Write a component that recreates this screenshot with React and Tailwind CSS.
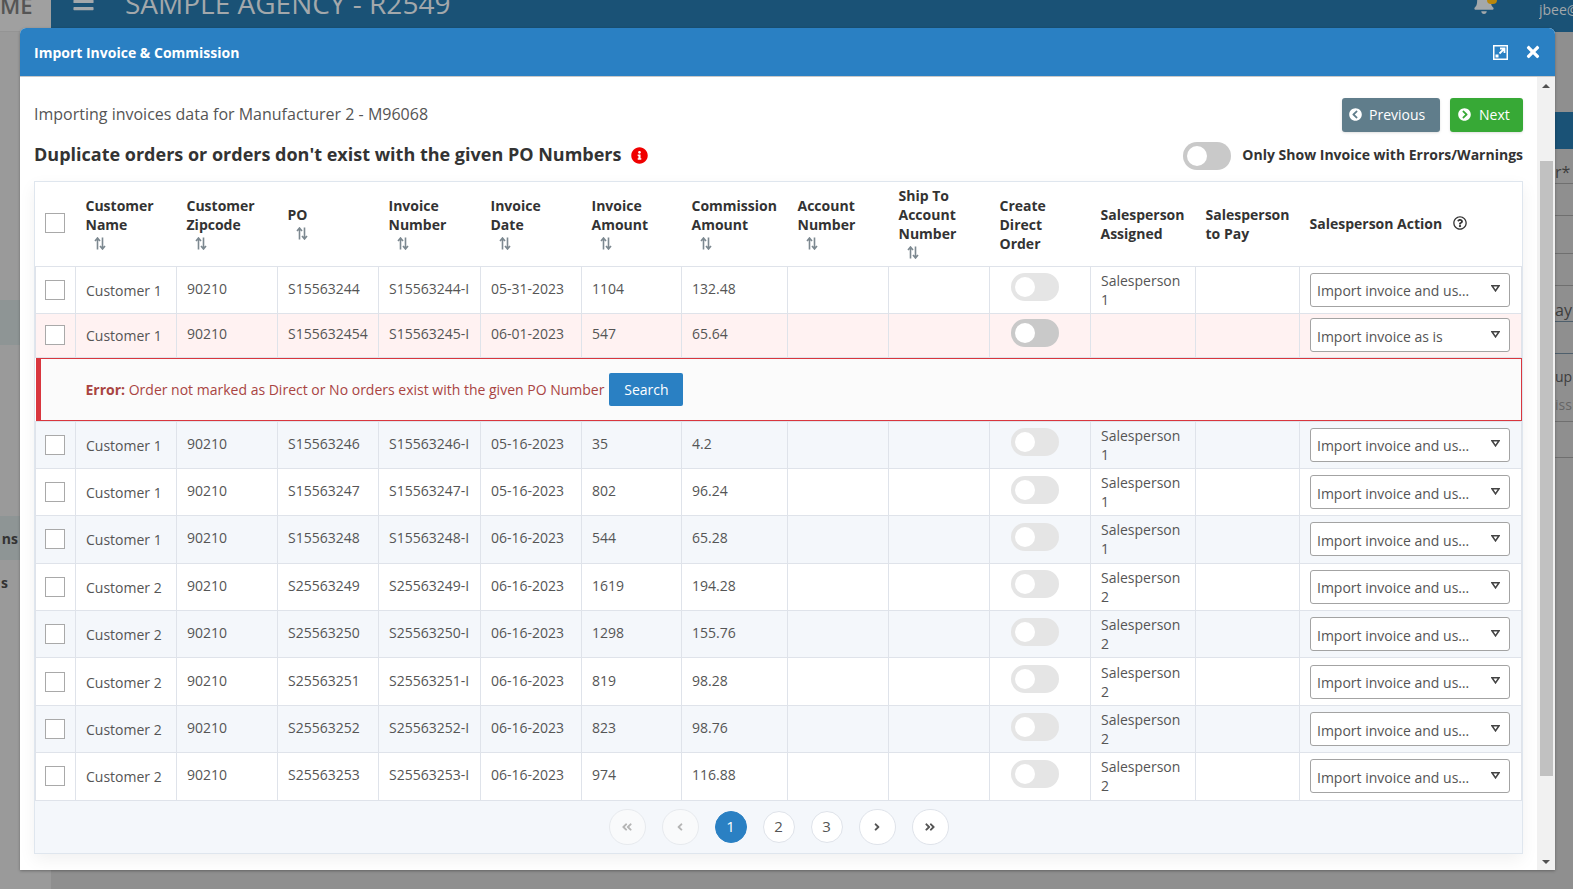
import React from 'react';
import { FaBars, FaBell, FaTimes, FaChevronCircleLeft, FaChevronCircleRight, FaInfoCircle, FaRegQuestionCircle, FaAngleDoubleLeft, FaAngleDoubleRight, FaAngleLeft, FaAngleRight } from "react-icons/fa";

const rows = [
    { c: 'Customer 1', po: 'S15563246', inv: 'S15563246-I', date: '05-16-2023', amt: '35', com: '4.2', sp: '1' },
    { c: 'Customer 1', po: 'S15563247', inv: 'S15563247-I', date: '05-16-2023', amt: '802', com: '96.24', sp: '1' },
    { c: 'Customer 1', po: 'S15563248', inv: 'S15563248-I', date: '06-16-2023', amt: '544', com: '65.28', sp: '1' },
    { c: 'Customer 2', po: 'S25563249', inv: 'S25563249-I', date: '06-16-2023', amt: '1619', com: '194.28', sp: '2' },
    { c: 'Customer 2', po: 'S25563250', inv: 'S25563250-I', date: '06-16-2023', amt: '1298', com: '155.76', sp: '2' },
    { c: 'Customer 2', po: 'S25563251', inv: 'S25563251-I', date: '06-16-2023', amt: '819', com: '98.28', sp: '2' },
    { c: 'Customer 2', po: 'S25563252', inv: 'S25563252-I', date: '06-16-2023', amt: '823', com: '98.76', sp: '2' },
    { c: 'Customer 2', po: 'S25563253', inv: 'S25563253-I', date: '06-16-2023', amt: '974', com: '116.88', sp: '2' },
];

const headers = [
    ['Customer Name', true], ['Customer Zipcode', true], ['PO', true], ['Invoice Number', true],
    ['Invoice Date', true], ['Invoice Amount', true], ['Commission Amount', true], ['Account Number', true],
    ['Ship To Account Number', true], ['Create Direct Order', false], ['Salesperson Assigned', false], ['Salesperson to Pay', false],
];

const SortIcon = () => (
    <svg width="12" height="13" viewBox="0 0 12 13" className="block ml-[8px] text-[#7c8890]" fill="none" stroke="currentColor" strokeWidth="1.6">
        <path d="M3.5 12.5V1.5M1 4l2.5-3L6 4" />
        <path d="M8.5 .5v11M6 9l2.5 3L11 9" />
    </svg>
);

const Checkbox = () => <div className="w-5 h-5 ml-[9px] bg-white border-[1.5px] border-[#a9a9a9]" />;

const Toggle = ({ dark }) => (
    <div className={`w-12 h-7 ml-[21px] rounded-full p-1 ${dark ? 'bg-[#c9c9c9]' : 'bg-[#e5e5e5]'}`}>
        <div className="w-5 h-5 rounded-full bg-white" />
    </div>
);

const Select = ({ text }) => (
    <div className="w-[200px] h-[34px] bg-white border border-[#a3a3a3] rounded-[3px] pl-[6px] pr-[9px] pt-[2px] flex items-center justify-between text-[14px] text-[#555]">
        <span className="whitespace-nowrap">{text}</span>
        <svg width="9" height="7" viewBox="0 0 11 9" className="-mt-[4px]" fill="none" stroke="#444" strokeWidth="2">
            <path d="M1 1h9L5.500 7.500z" />
        </svg>
    </div>
);

const Row = ({ r, bg, h }) => {
    const td = "border border-[#dfe3ea] px-[10px] align-middle text-[14px] leading-[19px] text-[#555]";
    const up = td + " pb-[3px]";
    return (
        <tr className={bg} style={{ height: h }}>
            <td className={td + " !px-0"}><Checkbox /></td>
            <td className={td + " pt-[1px]"}>{r.c}</td>
            <td className={up}>90210</td>
            <td className={up}>{r.po}</td>
            <td className={up}>{r.inv}</td>
            <td className={up}>{r.date}</td>
            <td className={up}>{r.amt}</td>
            <td className={up}>{r.com}</td>
            <td className={up}></td>
            <td className={up}></td>
            <td className={td + " !px-0"}><div className="pb-[5px]"><Toggle dark={r.dark} /></div></td>
            <td className={td}>{r.sp ? <>Salesperson<br />{r.sp}</> : null}</td>
            <td className={td}></td>
            <td className={td}><Select text={r.action || 'Import invoice and us…'} /></td>
        </tr>
    );
};

const PageBtn = ({ children, off, active, big }) => (
    <div className={`flex items-center justify-center rounded-full border ${big ? 'w-[37px] h-[36px] text-[12px]' : 'w-[32px] h-[32px] text-[15px]'} ${active ? 'bg-[#2a80c3] border-[#2a80c3] text-white' : off ? 'bg-[#f9fafb] border-[#e7eaee] text-[#b5b5b5]' : 'bg-white border-[#dfe3ea] text-[#555]'}`}>
        {children}
    </div>
);

const SideLine = ({ h, text, dark }) => (
    <div className={`border-b ${dark ? 'border-[#4e5f6c]' : 'border-[#6f6f6f]'} text-[16px] leading-[20px] text-[#3d3d3d] flex items-end whitespace-nowrap pb-[1px]`} style={{ height: h }}>
        {text}
    </div>
);

export default function App() {
    return (
        <div className="relative h-[889px] w-full overflow-hidden bg-[#8f8f8f] font-['Open_Sans',sans-serif]">
            {/* Page behind the dialog */}
            <div className="flex h-[32px]">
                <div className="w-[51px] bg-[#a0a0a0] border-b border-[#949494] overflow-hidden">
                    <div className="-mt-[11px] text-[22px] leading-[32px] font-semibold text-[#555]">ME</div>
                </div>
                <div className="flex-1 bg-[#1a5276] flex items-start overflow-hidden">
                    <FaBars className="ml-[21px] -mt-[10px] w-[23px] h-[23px] text-[#a3a8ab]" />
                    <div className="ml-[30px] -mt-[13px] text-[28px] leading-[32px] text-[#a3a8ab] whitespace-nowrap">SAMPLE AGENCY - R2549</div>
                    <div className="ml-auto relative w-[30px] h-[14px] mr-[37px]">
                        <FaBell className="-mt-[8px] w-[24px] h-[22px] text-[#a3a8ab]" />
                        <div className="absolute -top-[4px] left-[15px] w-[10px] h-[8px] rounded-full bg-[#b8860b]" />
                    </div>
                    <div className="w-[34px] text-[14px] leading-[19px] text-[#a3a8ab] overflow-hidden">jbee@</div>
                </div>
            </div>
            <div className="flex h-[857px]">
                <div className="w-[51px] bg-[#9a9a9a] text-[14px] font-bold text-[#333]">
                    <div className="h-[268px]" />
                    <div className="h-[45px] bg-[#8e9595]" />
                    <div className="h-[171px]" />
                    <div className="h-[44px] bg-[#8e9595] flex items-center justify-end pr-[33px]">ns</div>
                    <div className="h-[44px] flex items-center justify-end pr-[43px]">s</div>
                </div>
                <div className="flex-1" />
                <div className="w-[18px] overflow-hidden">
                    <div className="h-[80px]" />
                    <div className="h-[37px] bg-[#1a5276]" />
                    <SideLine h="35px" text="r*" />
                    <SideLine h="32px" />
                    <SideLine h="38px" />
                    <SideLine h="32px" />
                    <SideLine h="36px" text="ay" dark />
                    <SideLine h="32px" dark />
                    <div className="h-[33px] text-[14px] text-[#3d3d3d] flex items-end whitespace-nowrap">up</div>
                    <div className="h-[35px] text-[14px] text-[#666] border-b border-[#6f6f6f] flex items-end whitespace-nowrap pb-[6px]">issi</div>
                    <SideLine h="36px" />
                </div>
            </div>

            {/* Dialog */}
            <div className="absolute left-[20px] top-[28px] w-[1535px] h-[842px] bg-white rounded-t-[6px] flex flex-col shadow-[0_1px_3px_rgba(0,0,0,0.3)]">
                <div className="h-[49px] shrink-0 bg-[#2a80c3] border-b border-[#c8c8c8] rounded-t-[6px] flex items-center pl-[14px] pr-[13px]">
                    <div className="text-[14px] font-bold text-white flex-1">Import Invoice &amp; Commission</div>
                    <svg width="15" height="15" viewBox="0 0 15 15" className="mr-[16px]" fill="none">
                        <rect x=".75" y=".75" width="13.500" height="13.500" stroke="#fff" strokeWidth="1.500" />
                        <path d="M6.500 8.500l4-4M7 3.500h4.500V8" stroke="#fff" strokeWidth="1.800" />
                        <rect x="2.500" y="9.500" width="3" height="3" fill="#fff" />
                    </svg>
                    <FaTimes className="w-[18px] h-[18px] text-white" />
                </div>

                <div className="flex-1 flex min-h-0">
                    <div className="flex-1 min-w-0 px-[14px] pt-[21px]">
                        <div className="flex items-center justify-between h-[34px]">
                            <div className="text-[16px] text-[#555] pb-[2px]">Importing invoices data for Manufacturer 2 - M96068</div>
                            <div className="flex gap-[10px]">
                                <button className="h-[34px] w-[98px] bg-[#607d8b] rounded-[3px] text-white text-[14px] flex items-center pl-[7px] gap-[7px] pb-[1px] shadow-sm">
                                    <FaChevronCircleLeft className="w-[13px] h-[13px]" />Previous
                                </button>
                                <button className="h-[34px] w-[73px] bg-[#37a936] rounded-[3px] text-white text-[14px] flex items-center pl-[8px] gap-[8px] pb-[1px] shadow-sm">
                                    <FaChevronCircleRight className="w-[13px] h-[13px]" />Next
                                </button>
                            </div>
                        </div>
                        <div className="flex items-center h-[28px] mt-[10px] mb-[11px]">
                            <div className="text-[18px] font-bold text-[#333] pb-[4px]">Duplicate orders or orders don't exist with the given PO Numbers</div>
                            <FaInfoCircle className="ml-[10px] -mt-[2px] w-[17px] h-[17px] text-[#f00000]" />
                            <div className="ml-auto w-12 h-7 rounded-full p-1 bg-[#c9c9c9]">
                                <div className="w-5 h-5 rounded-full bg-white" />
                            </div>
                            <div className="ml-[11px] text-[14px] font-bold text-[#333] pb-[4px]">Only Show Invoice with Errors/Warnings</div>
                        </div>

                        {/* Table */}
                        <div className="border border-[#dfe6ee] shadow-[0_6px_16px_rgba(0,0,0,0.06)]">
                            <table className="w-full table-fixed border-collapse -mt-px">
                                <colgroup>
                                    <col className="w-[40px]" /><col className="w-[101px]" /><col className="w-[101px]" /><col className="w-[101px]" />
                                    <col className="w-[102px]" /><col className="w-[101px]" /><col className="w-[100px]" /><col className="w-[106px]" />
                                    <col className="w-[101px]" /><col className="w-[101px]" /><col className="w-[101px]" /><col className="w-[105px]" />
                                    <col className="w-[104px]" /><col />
                                </colgroup>
                                <thead>
                                    <tr className="h-[85px] border-b border-[#dfe3ea]">
                                        <th className="p-0 align-middle"><Checkbox /></th>
                                        {headers.map(([label, sort]) => (
                                            <th key={label} className="px-[10px] pt-[2px] align-middle text-left text-[14px] leading-[19px] font-bold text-[#333]">
                                                {label}
                                                {sort && <div className="pt-[3px] pb-[3px]"><SortIcon /></div>}
                                            </th>
                                        ))}
                                        <th className="px-[10px] align-middle text-left text-[14px] leading-[19px] font-bold text-[#333] whitespace-nowrap">
                                            <span className="flex items-center gap-[11px]">Salesperson Action <FaRegQuestionCircle className="w-[14px] h-[14px]" /></span>
                                        </th>
                                    </tr>
                                </thead>
                                <tbody>
                                    <Row h="47px" bg="bg-white" r={{ c: 'Customer 1', po: 'S15563244', inv: 'S15563244-I', date: '05-31-2023', amt: '1104', com: '132.48', sp: '1' }} />
                                    <Row h="44px" bg="bg-[#fff2f2]" r={{ c: 'Customer 1', po: 'S155632454', inv: 'S15563245-I', date: '06-01-2023', amt: '547', com: '65.64', dark: true, action: 'Import invoice as is' }} />
                                    <tr className="h-[63px] bg-[#fbfbfb]">
                                        <td colSpan={14} className="p-0 h-[63px]">
                                            <div className="h-[63px] border border-[#d9363e] border-l-[5px] flex items-center pl-[45px] gap-[5px] text-[14px] text-[#a94442]">
                                                <div><b>Error:</b> Order not marked as Direct or No orders exist with the given PO Number</div>
                                                <button className="h-[33px] w-[74px] bg-[#2a80c3] rounded-[2px] text-white text-[14px]">Search</button>
                                            </div>
                                        </td>
                                    </tr>
                                    {rows.map((r, i) => (
                                        <Row key={r.po} r={r} h="47.4px" bg={i % 2 === 0 ? 'bg-[#f4f7fb]' : 'bg-white'} />
                                    ))}
                                </tbody>
                            </table>
                            <div className="h-[52px] bg-[#f4f7fb] flex items-center justify-center gap-4">
                                <PageBtn big off><FaAngleDoubleLeft /></PageBtn>
                                <PageBtn big off><FaAngleLeft /></PageBtn>
                                <PageBtn active>1</PageBtn>
                                <PageBtn>2</PageBtn>
                                <PageBtn>3</PageBtn>
                                <PageBtn big><FaAngleRight /></PageBtn>
                                <PageBtn big><FaAngleDoubleRight /></PageBtn>
                            </div>
                        </div>
                    </div>

                    {/* Scrollbar */}
                    <div className="w-[18px] shrink-0 bg-[#f1f1f1] flex flex-col items-center">
                        <div className="h-[84px] w-full flex justify-center pt-[7px]">
                            <div className="w-0 h-0 border-x-[4px] border-x-transparent border-b-[4px] border-b-[#505050]" />
                        </div>
                        <div className="w-[13px] h-[615px] bg-[#c1c1c1]" />
                        <div className="mt-auto mb-[6px] w-0 h-0 border-x-[4px] border-x-transparent border-t-[4px] border-t-[#505050]" />
                    </div>
                </div>
            </div>
        </div>
    );
}
